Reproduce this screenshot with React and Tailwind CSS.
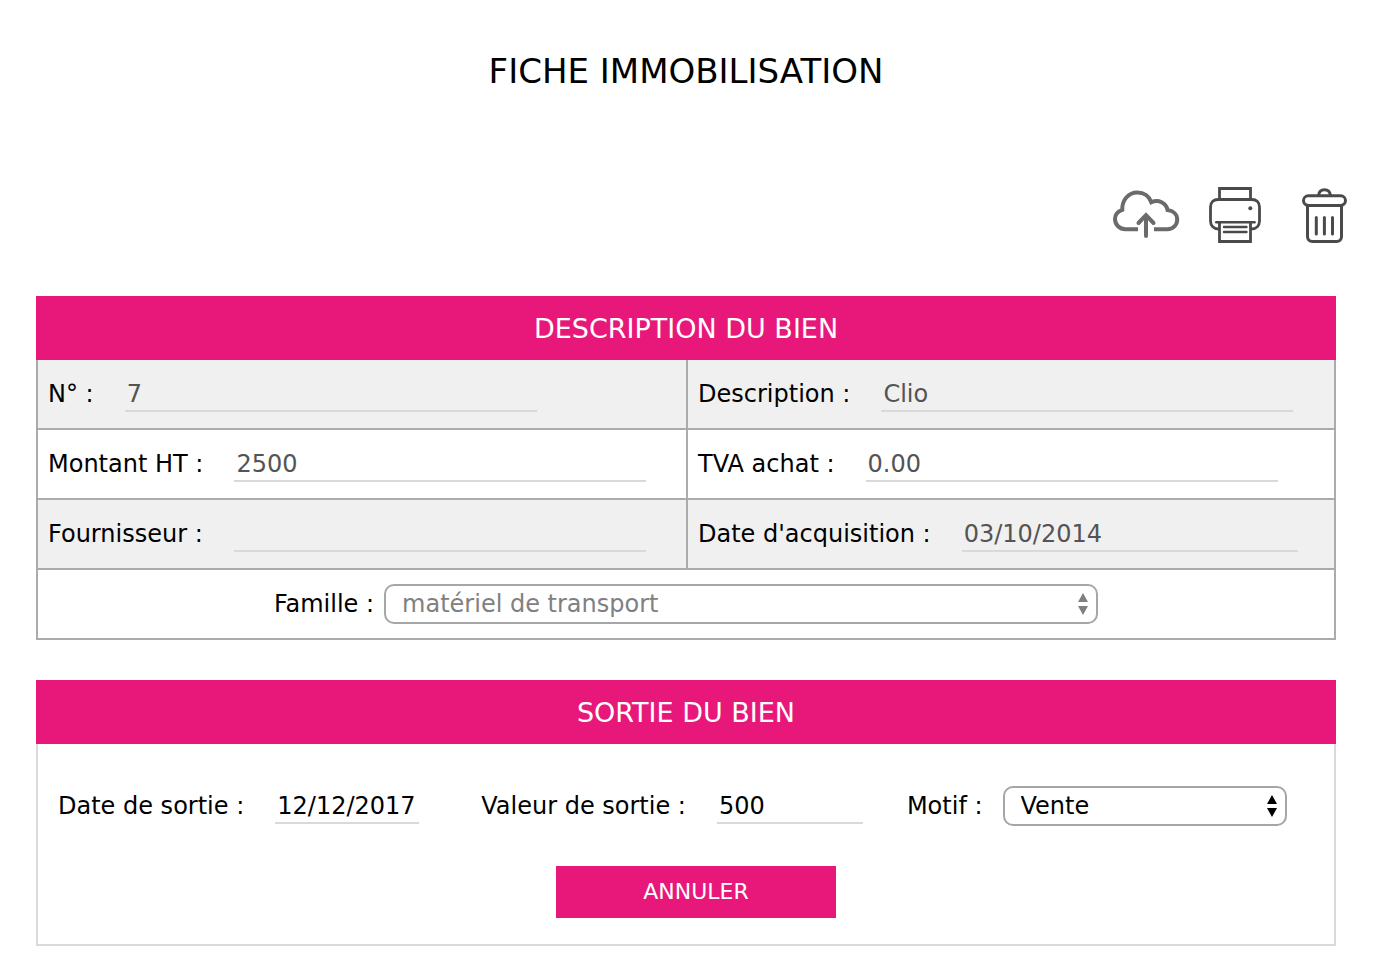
function SectionTitle({ children }) {
  return (
    <h2 className="flex h-16 items-center justify-center bg-[#e8187a] pt-0.5 text-[27px] text-white">{children}</h2>
  );
}

function Field({ id, label, value, muted, inputClass }) {
  return (
    <div className="flex items-center gap-[31px]">
      <label htmlFor={id} className="leading-9 whitespace-nowrap">{label} :</label>
      <input
        id={id}
        type="text"
        defaultValue={value}
        readOnly={muted}
        className={`h-9 min-w-0 border-b-2 border-[#d9d9d9] bg-transparent pt-0.5 pl-0.5 outline-none ${muted ? "text-[#545454]" : "text-black"} ${inputClass}`}
      />
    </div>
  );
}

function Select({ id, options, className, wrapClass }) {
  return (
    <span className={`relative inline-flex ${wrapClass}`}>
      <select id={id} className={`h-10 w-full appearance-none rounded-[10px] border-2 border-[#a6a6a6] bg-white pb-0.5 pl-4 outline-none ${className}`}>
        {options.map((o) => (
          <option key={o}>{o}</option>
        ))}
      </select>
      <svg viewBox="0 0 12 22" className="pointer-events-none absolute top-[9px] right-[9px] h-[22px] w-3" fill="currentColor" aria-hidden="true">
        <path d="M6 0 L11 9 H1 Z M1 13 H11 L6 22 Z" />
      </svg>
    </span>
  );
}

function CloudIcon() {
  return (
    <svg width="68" height="52" viewBox="0 0 68 52" fill="none" stroke="#6b6b6b" strokeWidth="4" aria-hidden="true">
      <path d="M26 40.300 H13.500 C7.500 40.300 3 35.700 3 30 C3 26 5.800 22.300 10.300 20.800 C9.800 11 16.500 3.500 25.300 3.500 C32 3.500 37.300 7.500 39.300 13.300 C46.500 10 54.300 14 55.500 21 C61.300 21.700 65.200 25.500 65.200 30.500 C65.200 36 61 40.300 55.500 40.300 H42" />
      <path d="M34 47 V27 M26.500 34 L34 26.200 L41.500 34" strokeLinecap="round" />
    </svg>
  );
}

function PrinterIcon() {
  return (
    <svg width="52" height="56" viewBox="0 0 52 56" fill="none" stroke="#4a4a4a" strokeWidth="2.800" aria-hidden="true">
      <path d="M10.500 12.500 V1.500 H41.500 V12.500" />
      <path d="M10 42 C4.500 42 1.500 38.500 1.500 34 V20 C1.500 15.500 4.500 12.500 9 12.500 H43 C47.500 12.500 50.500 15.500 50.500 20 V34 C50.500 38.500 47.500 42 42 42" />
      <path d="M7.300 35.300 H45.500" strokeWidth="2.600" strokeLinecap="round" />
      <path d="M10.500 36 V54.500 H41.500 V36" />
      <path d="M15 40 H37.500 M15 45 H37.500" strokeWidth="2.400" strokeLinecap="round" />
      <circle cx="41.300" cy="21.300" r="2" fill="#4a4a4a" stroke="none" />
    </svg>
  );
}

function TrashIcon() {
  return (
    <svg width="45" height="56" viewBox="0 0 45 56" fill="none" stroke="#4a4a4a" strokeWidth="3" aria-hidden="true">
      <path d="M16.500 8.500 C17 4.500 19.500 2.700 22.500 2.700 C25.500 2.700 28 4.500 28.500 8.500" />
      <rect x="1.500" y="8.800" width="42" height="9.600" rx="4.800" />
      <path d="M5.500 19 V49.500 C5.500 52.500 7.500 54.500 10.500 54.500 H34.500 C37.500 54.500 39.500 52.500 39.500 49.500 V19" />
      <path d="M14.300 30.500 V47 M22.400 30.500 V47 M30.500 30.500 V47" strokeLinecap="round" />
    </svg>
  );
}

const cell = "h-[70px] flex items-center border-b-2 border-[#ababab] pl-2.5";
const left = "border-r-2";

export default function App() {
  return (
    <main className="min-h-screen bg-white pr-10 pb-6 pl-9 font-['Verdana','DejaVu_Sans',sans-serif] text-[24px] text-black">
      <h1 className="pt-[51px] text-center text-[34px] leading-10">FICHE IMMOBILISATION</h1>

      <div className="-mr-[11px] flex items-center justify-end pt-24">
        <button type="button" aria-label="Exporter" className="mr-[29px]"><CloudIcon /></button>
        <button type="button" aria-label="Imprimer" className="mr-[41px]"><PrinterIcon /></button>
        <button type="button" aria-label="Supprimer"><TrashIcon /></button>
      </div>

      <section className="pt-[53px]">
        <SectionTitle>DESCRIPTION DU BIEN</SectionTitle>
        <div className="grid grid-cols-[650fr_646fr] border-x-2 border-[#ababab]">
          <div className={`${cell} ${left} bg-[#f0f0f0]`}>
            <Field id="numero" label="N°" value="7" muted inputClass="w-[412px]" />
          </div>
          <div className={`${cell} bg-[#f0f0f0]`}>
            <Field id="description" label="Description" value="Clio" muted inputClass="w-[412px]" />
          </div>
          <div className={`${cell} ${left}`}>
            <Field id="montant" label="Montant HT" value="2500" muted inputClass="w-[412px]" />
          </div>
          <div className={cell}>
            <Field id="tva" label="TVA achat" value="0.00" muted inputClass="w-[412px]" />
          </div>
          <div className={`${cell} ${left} bg-[#f0f0f0]`}>
            <Field id="fournisseur" label="Fournisseur" value="" muted inputClass="w-[412px]" />
          </div>
          <div className={`${cell} bg-[#f0f0f0]`}>
            <Field id="acquisition" label="Date d'acquisition" value="03/10/2014" muted inputClass="w-[336px]" />
          </div>
          <div className="col-span-2 flex h-[70px] items-center justify-center gap-2.5 border-b-2 border-[#ababab]">
            <label htmlFor="famille" className="leading-9">Famille :</label>
            <Select id="famille" options={["matériel de transport"]} className="text-[#808080]" wrapClass="w-[714px] text-[#808080]" />
          </div>
        </div>
      </section>

      <section className="pt-10">
        <SectionTitle>SORTIE DU BIEN</SectionTitle>
        <div className="border-x-2 border-b-2 border-[#d9d9d9] px-5 pt-[42px] pb-[26px]">
          <div className="flex items-center">
            <Field id="date-sortie" label="Date de sortie" value="12/12/2017" inputClass="w-36" />
            <div className="ml-[62px]">
              <Field id="valeur-sortie" label="Valeur de sortie" value="500" inputClass="w-[146px]" />
            </div>
            <div className="ml-11 flex items-center gap-5">
              <label htmlFor="motif" className="leading-9 whitespace-nowrap">Motif :</label>
              <Select id="motif" options={["Vente", "Cession", "Rebut"]} className="text-black" wrapClass="w-[284px]" />
            </div>
          </div>
          <div className="flex justify-center pt-10 pl-5">
            <button type="button" className="h-[52px] w-[280px] bg-[#e8187a] pb-0.5 text-[22px] text-white">ANNULER</button>
          </div>
        </div>
      </section>
    </main>
  );
}
